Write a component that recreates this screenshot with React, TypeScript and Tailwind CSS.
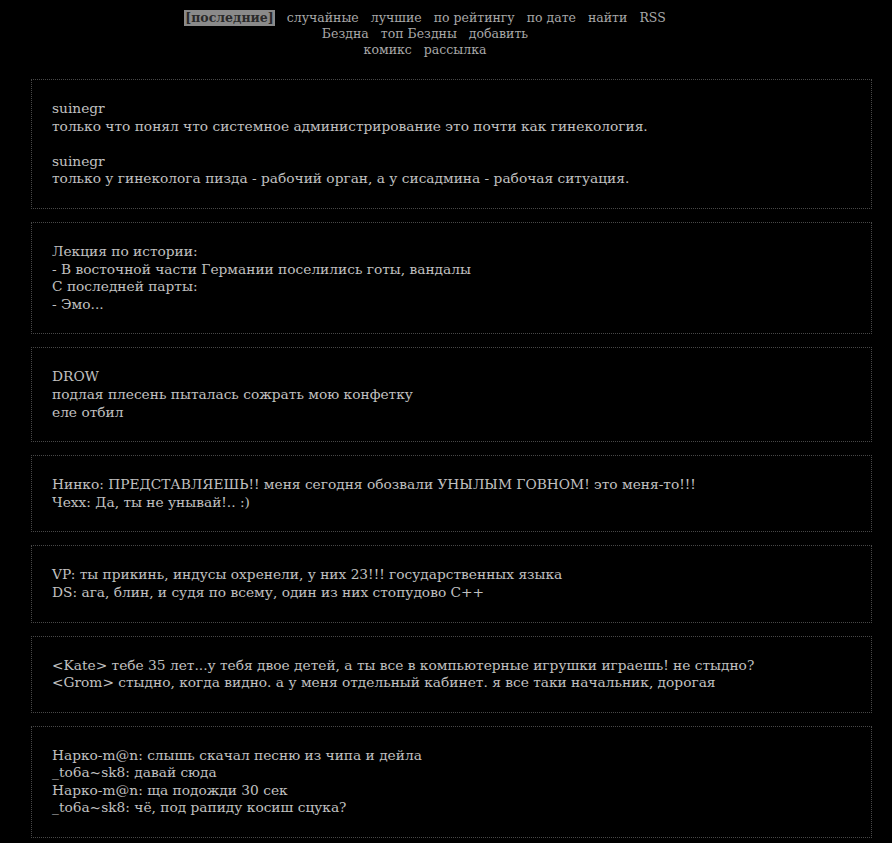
const navRows = [
  ["[последние]", "случайные", "лучшие", "по рейтингу", "по дате", "найти", "RSS"],
  ["Бездна", "топ Бездны", "добавить"],
  ["комикс", "рассылка"],
];

const quotes: string[] = [
  "suinegr\nтолько что понял что системное администрирование это почти как гинекология.\n\nsuinegr\nтолько у гинеколога пизда - рабочий орган, а у сисадмина - рабочая ситуация.",
  "Лекция по истории:\n- В восточной части Германии поселились готы, вандалы\nС последней парты:\n- Эмо...",
  "DROW\nподлая плесень пыталась сожрать мою конфетку\nеле отбил",
  "Нинко: ПРЕДСТАВЛЯЕШЬ!! меня сегодня обозвали УНЫЛЫМ ГОВНОМ! это меня-то!!!\nЧехх: Да, ты не унывай!.. :)",
  "VP: ты прикинь, индусы охренели, у них 23!!! государственных языка\nDS: ага, блин, и судя по всему, один из них стопудово С++",
  "<Kate> тебе 35 лет...у тебя двое детей, а ты все в компьютерные игрушки играешь! не стыдно?\n<Grom> стыдно, когда видно. а у меня отдельный кабинет. я все таки начальник, дорогая",
  "Нарко-m@n: слышь скачал песню из чипа и дейла\n_to6a~sk8: давай сюда\nНарко-m@n: ща подожди 30 сек\n_to6a~sk8: чё, под рапиду косиш сцука?",
];

const Nav = () => (
  <div className="w-[850px] pt-[10px] text-center text-[12.5px] leading-[16px] text-[#a8a8a8]">
    {navRows.map((row, i) => (
      <div key={i} className="flex justify-center gap-[12px]">
        {row.map((item) =>
          item === "[последние]" ? (
            <span key={item} className="bg-[#8a8a8a] px-[1px] font-bold text-[#2a2a2a]">
              {item}
            </span>
          ) : (
            <span key={item}>{item}</span>
          )
        )}
      </div>
    ))}
  </div>
);

const Quote = ({ text }: { text: string }) => (
  <div className="whitespace-pre-line border border-dotted border-[#484848] px-[20px] py-[20px] text-[13.75px] leading-[17.6px] text-[#c0c0c0]">
    {text}
  </div>
);

export default function App() {
  return (
    <div
      className="min-h-screen bg-black"
      style={{ fontFamily: '"DejaVu Serif", serif' }}
    >
      <Nav />
      <div className="ml-[31px] mr-[20px] mt-[21px] flex flex-col gap-[13px] pb-4">
        {quotes.map((q, i) => (
          <Quote key={i} text={q} />
        ))}
      </div>
    </div>
  );
}
